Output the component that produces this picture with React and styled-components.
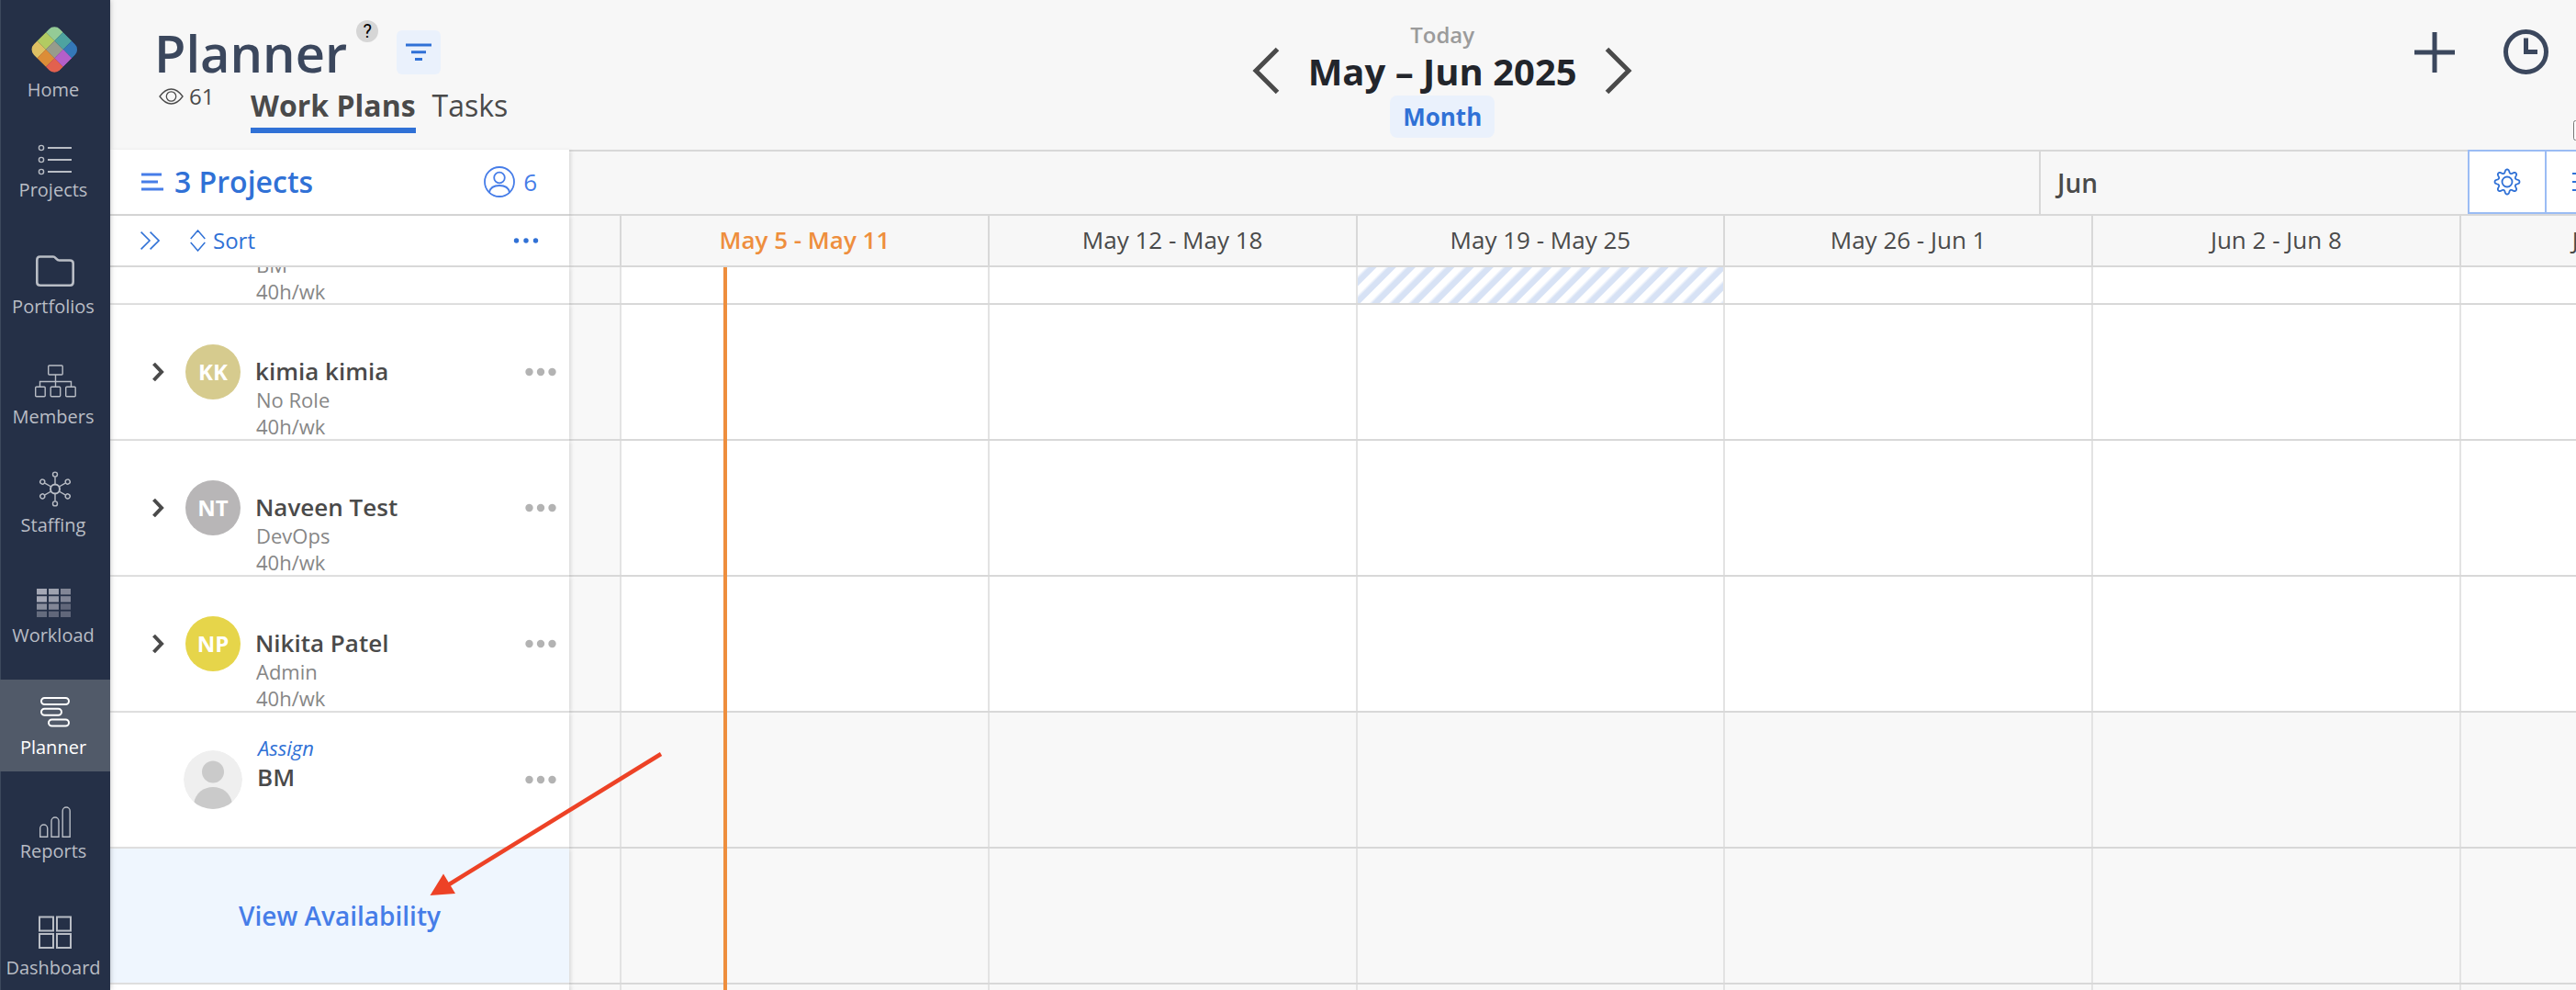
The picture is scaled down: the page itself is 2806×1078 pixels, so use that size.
import React from "react";
import styled, { createGlobalStyle } from "styled-components";

const c = {
  navy: "#253047",
  ink: "#3b475d",
  text: "#4a4a4a",
  muted: "#868686",
  blue: "#3071d6",
  sky: "#467de8",
  tint: "#eaf1fc",
  line: "#d8d8d8",
  soft: "#e3e3e3",
  bar: "#f7f7f7",
  orange: "#ee8e3d",
};

const Global = createGlobalStyle`
  *, *::before, *::after { box-sizing: border-box; }
  body { margin: 0; }
  body, button, input { font-family: "Open Sans", "Noto Sans", sans-serif; }
  button { border: 0; padding: 0; background: none; cursor: pointer; }
  a { text-decoration: none; }
  svg { display: block; flex: none; }
`;

const Page = styled.div`
  position: relative;
  display: flex;
  height: 100vh;
  overflow: hidden;
  background: #fff;
  color: ${c.text};
`;

/* ---------- side navigation ---------- */

const Sidebar = styled.nav`
  position: relative;
  z-index: 3;
  flex: none;
  display: flex;
  flex-direction: column;
  gap: 20px;
  width: 120px;
  padding-top: 20px;
  background: ${c.navy};
  box-shadow: inset 1px 0 #3d495c, 0 0 6px rgba(0, 0, 0, 0.25);
`;

const NavLink = styled.a`
  flex: none;
  display: flex;
  flex-direction: column;
  align-items: center;
  height: 100px;
  background: ${(p) => (p.$active ? "#515a69" : "transparent")};
  color: ${(p) => (p.$active ? "#fff" : "#b9bdc5")};
`;

const NavLabel = styled.span`
  padding-right: 4px;
  font-size: 20px;
  line-height: 28px;
`;

const HomeIcon = () => {
  const cells = ["#94cb96", "#4ea3a0", "#3478b8", "#b2cb62", "#979c8c", "#b45fc9", "#dfc063", "#dc8d37", "#e2614f"];
  return (
    <svg width="60" height="64" viewBox="0 0 60 64">
      <clipPath id="logo">
        <rect x="-20" y="-20" width="40" height="40" rx="8.5" />
      </clipPath>
      <g transform="translate(29.3 34) rotate(45)" clipPath="url(#logo)">
        {cells.map((fill, i) => (
          <rect key={fill} x={-20.2 + (i % 3) * 13.4} y={-20.2 + Math.floor(i / 3) * 13.4} width="13.5" height="13.5" fill={fill} />
        ))}
      </g>
    </svg>
  );
};

const Icon = ({ h = 60, w = 60, sw = 1.4, children }) => (
  <svg width={w} height={h} viewBox={`0 0 ${w} ${h}`} fill="none" stroke="currentColor" strokeWidth={sw}>
    {children}
  </svg>
);

const navIcons = {
  Home: <HomeIcon />,
  Projects: (
    <Icon h={53}>
      {[21, 34, 47].map((y) => (
        <g key={y}>
          <circle cx="15" cy={y} r="2.6" />
          <path d={`M22 ${y}H48`} strokeWidth="2" />
        </g>
      ))}
    </Icon>
  ),
  Portfolios: (
    <Icon sw={2.6}>
      <path d="M13.5 19.5H28c2.500 0 3.500 4 6.500 4H46c2.200 0 3.700 1 3.700 3.200V47c0 2.200-1 3.700-3.200 3.700H14c-2.200 0-3.700-1-3.700-3.200V23c0-2.200 1-3.500 3.200-3.500z" />
    </Icon>
  ),
  Members: (
    <Icon>
      <rect x="22.700" y="18" width="15.500" height="10" rx="1" />
      <path d="M30.500 28V41M13.500 41V35.500H47.500V41" />
      <rect x="8.700" y="41.200" width="10.500" height="10.500" rx="1" />
      <rect x="25.200" y="41.200" width="10.500" height="10.500" rx="1" />
      <rect x="41.700" y="41.200" width="10.500" height="10.500" rx="1" />
    </Icon>
  ),
  Staffing: (
    <Icon h={58}>
      <circle cx="30" cy="32.500" r="5" strokeWidth="2" />
      {[0, 60, 120, 180, 240, 300].map((a) => (
        <g key={a} transform={`rotate(${a} 30 32.5)`}>
          <path d="M30 27V19.200" />
          <circle cx="30" cy="16.600" r="2.500" />
        </g>
      ))}
    </Icon>
  ),
  Workload: (
    <Icon h={58}>
      {[
        [0.9, 0.85, 0.65],
        [0.9, 0.8, 0.65],
        [0.7, 0.65, 0.42],
        [0.45, 0.42, 0.42],
      ].map((row, y) =>
        row.map((o, x) => (
          <rect key={`${x}${y}`} x={10 + x * 13} y={21 + y * 8.2} width="11" height="6.400" fill="#b4b6c2" fillOpacity={o} stroke="none" />
        ))
      )}
    </Icon>
  ),
  Planner: (
    <Icon sw={2}>
      <rect x="15" y="20" width="30" height="7" rx="3.500" />
      <rect x="15" y="31.800" width="22" height="7" rx="3.500" />
      <rect x="23" y="43.500" width="22" height="7" rx="3.500" />
    </Icon>
  ),
  Reports: (
    <Icon h={53}>
      <path d="M13.700 51.300V42a4 4 0 0 1 8 0v9.300zM26 51.300V34a4 4 0 0 1 8 0v17.300zM38.200 51.300V23a4 4 0 0 1 8 0v28.300z" />
    </Icon>
  ),
  Dashboard: (
    <Icon sw={2}>
      <rect x="13" y="18.500" width="15" height="15" />
      <rect x="32" y="18.500" width="15" height="15" />
      <rect x="13" y="37" width="15" height="15" />
      <rect x="32" y="37" width="15" height="15" />
    </Icon>
  ),
};

/* ---------- top header ---------- */

const Main = styled.main`
  flex: 1;
  min-width: 0;
  display: flex;
  flex-direction: column;
  overflow: hidden;
`;

const Header = styled.header`
  flex: none;
  display: grid;
  grid-template-columns: 23fr auto 19fr;
  height: 163px;
  overflow: hidden;
  background: ${c.bar};
`;

const Brand = styled.div`
  padding: 24px 0 0 48px;
`;

const TitleRow = styled.div`
  display: flex;
  align-items: flex-start;
`;

const Title = styled.h1`
  margin: 0;
  font-size: 56px;
  font-weight: 600;
  line-height: 66px;
  color: ${c.ink};
`;

const Help = styled.button`
  width: 24px;
  height: 24px;
  margin: -2px 20px 0 10px;
  border-radius: 50%;
  background: #d6d6d6;
  color: #000;
  font-family: Roboto, sans-serif;
  font-size: 20px;
  line-height: 24px;
`;

const FilterButton = styled.button`
  display: grid;
  place-items: center;
  width: 48px;
  height: 48px;
  margin-top: 9px;
  border-radius: 6px;
  background: ${c.tint};
  color: ${c.blue};
`;

const TabsRow = styled.div`
  display: flex;
  align-items: flex-start;
`;

const Views = styled.span`
  display: flex;
  align-items: center;
  gap: 6px;
  width: 100px;
  margin-left: 5px;
  font-size: 24px;
  line-height: 30px;
`;

const Tab = styled.a`
  height: 49px;
  margin: 6px 18px 0 0;
  border-bottom: 6px solid ${(p) => (p.$active ? c.blue : "transparent")};
  color: ${c.text};
  font-size: 32px;
  font-weight: ${(p) => (p.$active ? 700 : 400)};
  line-height: 38px;
`;

const Period = styled.div`
  display: flex;
  align-items: flex-start;
  padding-top: 22px;
`;

const Step = styled.button`
  margin-top: 29px;
  color: ${c.text};
`;

const PeriodInfo = styled.div`
  display: flex;
  flex-direction: column;
  align-items: center;
  width: 354px;
`;

const Today = styled.button`
  color: #9b9b9b;
  font-size: 24px;
  font-weight: 600;
  line-height: 32px;
`;

const PeriodTitle = styled.h2`
  margin: 0;
  color: #22252b;
  font-size: 40px;
  font-weight: 700;
  line-height: 48px;
`;

const Scale = styled.button`
  margin-top: 2px;
  padding: 0 14px;
  border-radius: 8px;
  background: ${c.tint};
  color: ${c.blue};
  font-size: 26px;
  font-weight: 700;
  line-height: 46px;
`;

const Tools = styled.div`
  display: flex;
  flex-direction: column;
  align-items: flex-end;
  gap: 50px;
  padding-top: 32px;
`;

const Actions = styled.div`
  display: flex;
  align-items: center;
  gap: 53px;
  padding-right: 30px;
  color: ${c.ink};
`;

const IconButton = styled.button`
  color: inherit;
`;

const Check = styled.input`
  width: 22px;
  height: 22px;
  margin: 0 -19px 0 0;
`;

/* ---------- board ---------- */

const Band = styled.div`
  flex: none;
  display: flex;
  height: ${(p) => p.$h}px;
`;

const PanelCell = styled.div`
  position: relative;
  z-index: 2;
  flex: none;
  display: flex;
  align-items: center;
  width: 500px;
  border-bottom: 2px solid ${(p) => (p.$head ? c.line : c.soft)};
  background: #fff;
  box-shadow: 3px 0 4px -1px rgba(0, 0, 0, 0.12);
`;

const ProjectsCell = styled(PanelCell)`
  padding: 0 35px 0 34px;
  color: ${c.sky};
`;

const ProjectsToggle = styled.button`
  flex: 1;
  display: flex;
  align-items: center;
  gap: 11px;
  color: ${c.sky};
`;

const ProjectsText = styled.span`
  color: ${c.blue};
  font-size: 32px;
  font-weight: 600;
  line-height: 44px;
`;

const People = styled.button`
  display: flex;
  align-items: center;
  gap: 9px;
  color: ${c.sky};
  font-size: 26px;
  line-height: 36px;
`;

const SortCell = styled(PanelCell)`
  padding: 0 33px;
  color: ${c.blue};
`;

const SortButton = styled.button`
  display: flex;
  align-items: center;
  gap: 8px;
  margin: 0 auto 0 33px;
  color: ${c.blue};
  font-size: 24px;
  line-height: 34px;
`;

const Months = styled.div`
  flex: 1;
  min-width: 0;
  display: flex;
  border-top: 2px solid ${c.line};
  border-bottom: 2px solid ${c.line};
  background: ${c.bar};
`;

const Month = styled.div`
  flex: ${(p) => (p.$wide ? "0 0 1603px" : "1 1 0")};
  padding-left: 18px;
  border-right: ${(p) => (p.$wide ? `2px solid ${c.line}` : 0)};
  font-size: 28px;
  font-weight: 600;
  line-height: 68px;
`;

const ViewTools = styled.div`
  flex: none;
  display: flex;
  margin: -2px -52px 0 0;
`;

const ViewTool = styled.button`
  display: grid;
  place-items: center;
  width: 86px;
  height: 70px;
  margin-left: ${(p) => (p.$joined ? -2 : 0)}px;
  border: 2px solid #9bbcf4;
  background: #fff;
  color: ${c.blue};
`;

const Weeks = styled.div`
  flex: 1;
  min-width: 0;
  display: grid;
  grid-template-columns: 57px repeat(5, 400fr) 125fr;
  border-bottom: 2px solid ${c.line};
  background: ${(p) => (p.$shade ? "#f8f8f8" : "#fff")};
`;

const WeekHead = styled.div`
  min-width: 0;
  overflow: hidden;
  padding-left: ${(p) => (p.$cut ? 121 : 0)}px;
  border-right: ${(p) => (p.$cut ? 0 : 2)}px solid ${c.line};
  background: ${c.bar};
  color: ${(p) => (p.$now ? c.orange : c.text)};
  font-size: 26px;
  font-weight: ${(p) => (p.$now ? 600 : 400)};
  line-height: 52px;
  text-align: ${(p) => (p.$cut ? "left" : "center")};
  white-space: nowrap;
`;

const Day = styled.div`
  min-width: 0;
  border-right: 2px solid ${c.soft};
  background: ${(p) =>
    p.$off
      ? "repeating-linear-gradient(135deg, #fff 0, #fff 6px, #d7e2f5 9px, #d7e2f5 14px, #fff 15px)"
      : p.$past
      ? "#f8f8f8"
      : "transparent"};

  &:last-child {
    border-right: 0;
  }
`;

const Board = styled.div`
  position: relative;
  flex: 1;
  display: flex;
  flex-direction: column;
  overflow: hidden;
`;

const NowLine = styled.div`
  position: absolute;
  z-index: 1;
  top: 0;
  bottom: 0;
  left: 668px;
  width: 4px;
  background: ${c.orange};
`;

const PersonCell = styled(PanelCell)`
  padding: 0 14px 0 45px;
  ${(p) => p.$clipped && "overflow: hidden; align-items: flex-end;"}
`;

const Expand = styled.button`
  width: 37px;
  color: ${c.text};
`;

const Avatar = styled.span`
  flex: none;
  width: 60px;
  height: 60px;
  border-radius: 50%;
  background: ${(p) => p.$color};
  color: #fff;
  font-size: 24px;
  font-weight: 700;
  line-height: 60px;
  text-align: center;
`;

const Details = styled.div`
  flex: 1;
  align-self: ${(p) => (p.$clipped ? "flex-end" : "flex-start")};
  display: flex;
  flex-direction: column;
  align-items: flex-start;
  padding-top: ${(p) => p.$top}px;
  padding-left: 16px;
  margin-bottom: ${(p) => (p.$clipped ? -2 : 0)}px;
`;

const Name = styled.span`
  font-size: 26px;
  font-weight: 600;
  line-height: 34px;
`;

const Sub = styled.span`
  padding-left: 1px;
  color: ${c.muted};
  font-size: 22px;
  line-height: 29px;
`;

const Assign = styled.button`
  padding-left: 1px;
  color: ${c.blue};
  font-size: 22px;
  font-style: italic;
  line-height: 29px;
`;

const Spacer = styled.span`
  flex: none;
  width: ${(p) => p.$w}px;
`;

const Availability = styled(PanelCell)`
  justify-content: center;
  background: #eff6fe;
`;

const AvailabilityButton = styled.button`
  color: ${c.sky};
  font-size: 28px;
  font-weight: 600;
  line-height: 40px;
`;

const Pointer = styled.svg`
  position: absolute;
  z-index: 4;
  left: 460px;
  top: 810px;
  pointer-events: none;
`;

const Dots = ({ r, gap, w, color = "currentColor" }) => (
  <svg width={w} height="10" viewBox={`0 0 ${w} 10`} fill={color}>
    {[-1, 0, 1].map((i) => (
      <circle key={i} cx={w / 2 + i * gap} cy="5" r={r} />
    ))}
  </svg>
);

const More = () => (
  <IconButton aria-label="More">
    <Dots r={4.2} gap={12.5} w={34} color="#b3b3b3" />
  </IconButton>
);

const Blank = () => (
  <svg width="64" height="64" viewBox="0 0 64 64">
    <clipPath id="blank">
      <circle cx="32" cy="32" r="32" />
    </clipPath>
    <g clipPath="url(#blank)">
      <circle cx="32" cy="32" r="32" fill="#efefef" />
      <circle cx="32" cy="23.500" r="12" fill="#cacaca" />
      <path d="M11 58C13 46 22 40 32 40s19 6 21 18v8H11z" fill="#cacaca" />
    </g>
  </svg>
);

const gearPath = (() => {
  let d = "";
  const n = 96;
  for (let i = 0; i <= n; i++) {
    const a = (i / n) * Math.PI * 2;
    const wave = Math.cos(a * 8);
    const r = 11.6 + 1.9 * Math.sign(wave) * Math.pow(Math.abs(wave), 0.6);
    d += `${i ? "L" : "M"}${(15 + r * Math.sin(a)).toFixed(2)} ${(15 - r * Math.cos(a)).toFixed(2)}`;
  }
  return d + "Z";
})();

const Days = ({ shade, off }) => (
  <Weeks $shade={shade}>
    {[0, 1, 2, 3, 4, 5, 6].map((i) => (
      <Day key={i} $past={i === 0} $off={off === i} />
    ))}
  </Weeks>
);

const people = [
  { name: "kimia kimia", role: "No Role", initials: "KK", color: "#d6cb8e" },
  { name: "Naveen Test", role: "DevOps", initials: "NT", color: "#b8b6b7" },
  { name: "Nikita Patel", role: "Admin", initials: "NP", color: "#e6d54a" },
];

const weeks = ["", "May 5 - May 11", "May 12 - May 18", "May 19 - May 25", "May 26 - Jun 1", "Jun 2 - Jun 8", "Jun 9 - Jun 15"];

export default function App() {
  return (
    <Page>
      <Global />
      <Sidebar>
        {Object.keys(navIcons).map((name) => (
          <NavLink key={name} href="#" $active={name === "Planner"}>
            {navIcons[name]}
            <NavLabel>{name}</NavLabel>
          </NavLink>
        ))}
      </Sidebar>

      <Main>
        <Header>
          <Brand>
            <TitleRow>
              <Title>Planner</Title>
              <Help>?</Help>
              <FilterButton aria-label="Filter">
                <Icon w={28} h={20} sw={3}>
                  <path d="M0 2H28M6 9.700H22" />
                  <path d="M10 17.500H18" />
                </Icon>
              </FilterButton>
            </TitleRow>
            <TabsRow>
              <Views>
                <Icon w={27} h={18} sw={1.3}>
                  <path d="M1 9C5 3.500 9 1 13.500 1S22 3.500 26 9C22 14.500 18 17 13.500 17S5 14.500 1 9z" />
                  <circle cx="13.500" cy="9" r="5.200" />
                </Icon>
                61
              </Views>
              <Tab href="#" $active>
                Work Plans
              </Tab>
              <Tab href="#">Tasks</Tab>
            </TabsRow>
          </Brand>

          <Period>
            <Step aria-label="Previous">
              <Icon w={30} h={52} sw={5}>
                <path d="M27.500 2.500L4 26L27.500 49.500" />
              </Icon>
            </Step>
            <PeriodInfo>
              <Today>Today</Today>
              <PeriodTitle>May – Jun 2025</PeriodTitle>
              <Scale>Month</Scale>
            </PeriodInfo>
            <Step aria-label="Next">
              <Icon w={30} h={52} sw={5}>
                <path d="M2.500 2.500L26 26L2.500 49.500" />
              </Icon>
            </Step>
          </Period>

          <Tools>
            <Actions>
              <IconButton aria-label="Add">
                <Icon w={44} h={44} sw={5}>
                  <path d="M22 0V44M0 22H44" />
                </Icon>
              </IconButton>
              <IconButton aria-label="Timer">
                <Icon w={49} h={49} sw={5}>
                  <circle cx="24.500" cy="24.500" r="22" />
                  <path d="M24.500 9.500V24.500H37" />
                </Icon>
              </IconButton>
            </Actions>
            <Check type="checkbox" aria-label="Option" />
          </Tools>
        </Header>

        <Band $h={72}>
          <ProjectsCell $head>
            <ProjectsToggle>
              <Icon w={25} h={20} sw={3}>
                <path d="M0 2H22M0 10H18M0 18H24" />
              </Icon>
              <ProjectsText>3 Projects</ProjectsText>
            </ProjectsToggle>
            <People>
              <Icon w={34} h={34} sw={1.8}>
                <circle cx="17" cy="17" r="16" />
                <circle cx="17" cy="12.500" r="5.800" />
                <path d="M6 28.500C7 23 11 21 17 21s10 2 11 7.500" />
              </Icon>
              6
            </People>
          </ProjectsCell>
          <Months>
            <Month $wide />
            <Month>Jun</Month>
            <ViewTools>
              <ViewTool aria-label="Settings">
                <Icon w={30} h={30} sw={1.8}>
                  <path d={gearPath} strokeLinejoin="round" />
                  <circle cx="15" cy="15" r="5.500" />
                </Icon>
              </ViewTool>
              <ViewTool $joined aria-label="List">
                <Icon w={26} h={22} sw={2}>
                  <path d="M0 2H26M0 11H26M0 20H26" />
                </Icon>
              </ViewTool>
            </ViewTools>
          </Months>
        </Band>

        <Band $h={56}>
          <SortCell $head>
            <IconButton aria-label="Expand all">
              <Icon w={21} h={20} sw={1.6}>
                <path d="M.6 .6L10 10L.6 19.400M10.600 .6L20 10L10.600 19.400" />
              </Icon>
            </IconButton>
            <SortButton>
              <Icon w={17} h={24} sw={1.5}>
                <path d="M.7 10L8.500 1L16.300 10M.7 14L8.500 23L16.300 14" />
              </Icon>
              Sort
            </SortButton>
            <IconButton aria-label="Options">
              <Dots r={2.7} gap={10.5} w={28} />
            </IconButton>
          </SortCell>
          <Weeks>
            {weeks.map((w, i) => (
              <WeekHead key={i} $now={i === 1} $cut={i === 6}>
                {w}
              </WeekHead>
            ))}
          </Weeks>
        </Band>

        <Board>
          <Band $h={41}>
            <PersonCell $clipped>
              <Spacer $w={97} />
              <Details $clipped $top={0}>
                <Sub>BM</Sub>
                <Sub>40h/wk</Sub>
              </Details>
            </PersonCell>
            <Days off={3} />
          </Band>

          {people.map((p) => (
            <Band key={p.name} $h={148}>
              <PersonCell>
                <Expand aria-label="Expand">
                  <Icon w={14} h={22} sw={4}>
                    <path d="M2.500 2L11 11L2.500 20" />
                  </Icon>
                </Expand>
                <Avatar $color={p.color}>{p.initials}</Avatar>
                <Details $top={55}>
                  <Name>{p.name}</Name>
                  <Sub>{p.role}</Sub>
                  <Sub>40h/wk</Sub>
                </Details>
                <More />
              </PersonCell>
              <Days />
            </Band>
          ))}

          <Band $h={148}>
            <PersonCell>
              <Spacer $w={35} />
              <Blank />
              <Details $top={24}>
                <Assign>Assign</Assign>
                <Name>BM</Name>
              </Details>
              <More />
            </PersonCell>
            <Days shade />
          </Band>

          <Band $h={148}>
            <Availability>
              <AvailabilityButton>View Availability</AvailabilityButton>
            </Availability>
            <Days shade />
          </Band>

          <Band $h={148}>
            <PersonCell />
            <Days shade />
          </Band>
          <NowLine />
        </Board>
      </Main>

      <Pointer width="270" height="180" viewBox="0 0 270 180" aria-hidden="true">
        <path d="M260 11L26 155" stroke="#ed4226" strokeWidth="4.500" />
        <path d="M8.500 165L23 141.500L36 163z" fill="#ed4226" />
      </Pointer>
    </Page>
  );
}
